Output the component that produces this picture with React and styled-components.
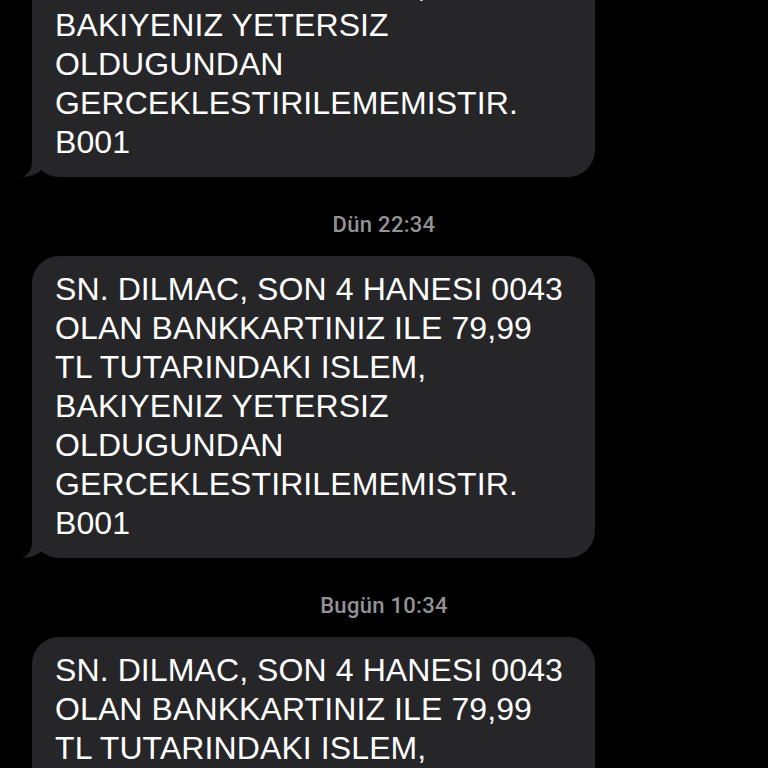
import React from "react";
import styled, { createGlobalStyle } from "styled-components";

const GlobalStyle = createGlobalStyle`
  html, body {
    margin: 0;
    padding: 0;
    background: #000;
    overflow: hidden;
  }
  body {
    font-family: "Liberation Sans", Arial, sans-serif;
  }
`;

const Screen = styled.div`
  width: 768px;
  height: 768px;
  overflow: hidden;
  background: #000;
`;

const Thread = styled.div`
  display: flex;
  flex-direction: column;
  margin-top: -125px;
`;

const Stamp = styled.div`
  margin: 35px 0 18px;
  height: 26px;
  line-height: 26px;
  text-align: center;
  color: #929297;
  font-family: Roboto, "Liberation Sans", sans-serif;
  font-weight: 500;
  font-size: 22px;
  letter-spacing: 0.3px;
`;

const Bubble = styled.div`
  position: relative;
  box-sizing: border-box;
  width: 563px;
  margin-left: 32px;
  padding: 14px 24px 15px 23px;
  border-radius: 27px;
  background: #262628;
  color: #fff;
  font-size: 32px;
  line-height: 39px;
  letter-spacing: 0.1px;
`;

const Line = styled.div`
  white-space: nowrap;
`;

const Tail = styled.svg`
  position: absolute;
  left: -10px;
  bottom: 0;
  width: 30px;
  height: 28px;
`;

const LINES = [
  "SN. DILMAC, SON 4 HANESI 0043",
  "OLAN BANKKARTINIZ ILE 79,99",
  "TL TUTARINDAKI ISLEM,",
  "BAKIYENIZ YETERSIZ",
  "OLDUGUNDAN",
  "GERCEKLESTIRILEMEMISTIR.",
  "B001",
];

const Message = ({ lines }) => (
  <Bubble>
    {lines.map((l, i) => (
      <Line key={i}>{l}</Line>
    ))}
    <Tail viewBox="0 0 30 28">
      <path d="M10 0 L10 12 Q10 24 0 28 Q12 28 21 20 L30 0 Z" fill="#262628" />
    </Tail>
  </Bubble>
);

const messages = [
  { stamp: null },
  { stamp: "Dün 22:34" },
  { stamp: "Bugün 10:34" },
];

export default function App() {
  return (
    <Screen>
      <GlobalStyle />
      <Thread>
        {messages.map((m, i) => (
          <React.Fragment key={i}>
            {m.stamp && <Stamp>{m.stamp}</Stamp>}
            <Message lines={LINES} />
          </React.Fragment>
        ))}
      </Thread>
    </Screen>
  );
}
